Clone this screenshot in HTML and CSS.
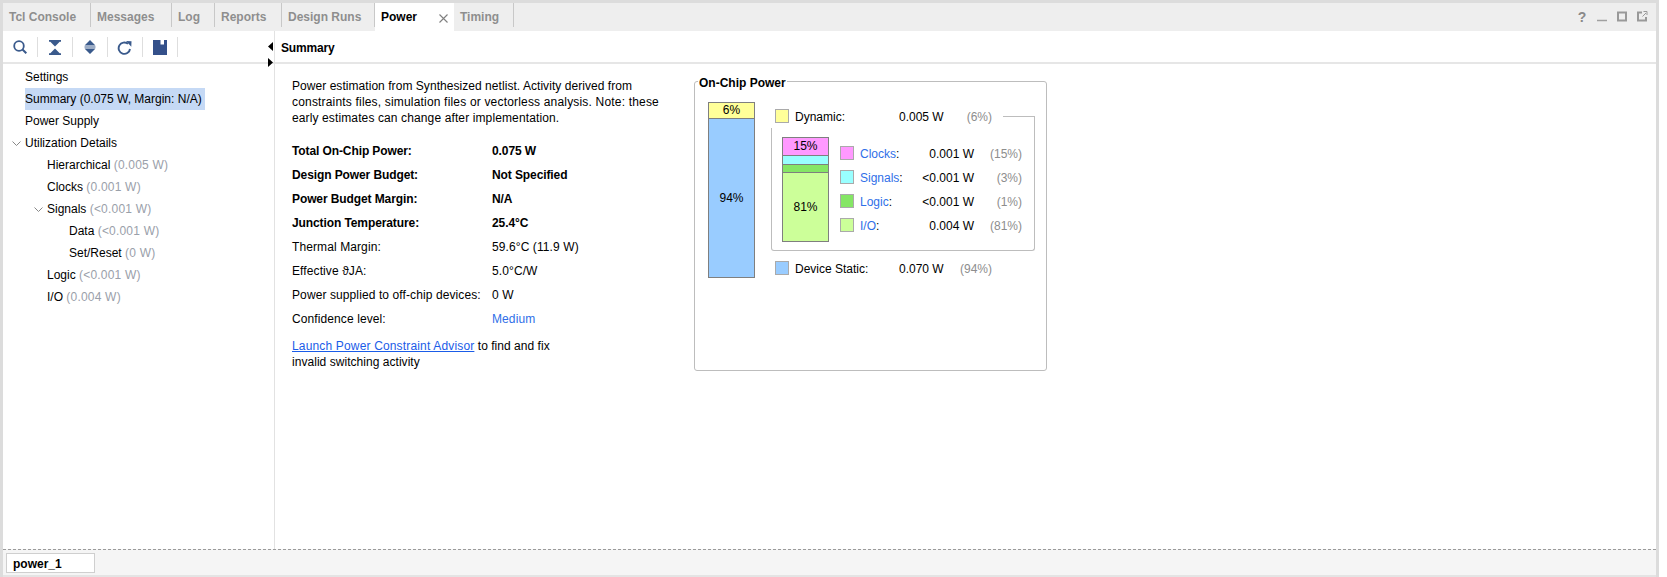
FILE: index.html
```html
<!DOCTYPE html>
<html lang="en">
<head>
<meta charset="utf-8">
<title>Power</title>
<link rel="stylesheet" href="styles.css">
</head>
<body>
<div class="window">
  <div class="tabbar">
    <div class="tab tab-tcl">Tcl Console</div>
    <div class="tab tab-msg">Messages</div>
    <div class="tab tab-log">Log</div>
    <div class="tab tab-rep">Reports</div>
    <div class="tab tab-run">Design Runs</div>
    <div class="tab tab-active">Power<svg class="close" width="9" height="9" viewBox="0 0 9 9"><path d="M.5.500l8 8M8.500.500l-8 8" stroke="#808080" stroke-width="1.1" fill="none"/></svg></div>
    <div class="tab tab-tim">Timing</div>
    <div class="win-icons">
      <span class="help">?</span>
      <svg width="12" height="12" viewBox="0 0 12 12"><path d="M1 9.500h10" stroke="#a0a0a0" stroke-width="1.500"/></svg>
      <svg width="12" height="12" viewBox="0 0 12 12"><rect x="2" y="1.500" width="8" height="8" fill="none" stroke="#999" stroke-width="2"/></svg>
      <svg width="12" height="12" viewBox="0 0 12 12"><path d="M6 1.500H2v8h8V6" fill="none" stroke="#999" stroke-width="2"/><path d="M6.500 5.500L10 2M7.500.500h3.500V4" fill="none" stroke="#999" stroke-width="1"/></svg>
    </div>
  </div>
  <div class="main">
    <aside class="side">
      <div class="toolbar">
        <button class="tool"><svg width="14" height="14" viewBox="0 0 14 14"><circle cx="6" cy="6" r="4.800" fill="none" stroke="#3a5a8c" stroke-width="1.800"/><path d="M9.500 9.500l3.800 3.800" stroke="#3a5a8c" stroke-width="2"/></svg></button>
        <button class="tool"><svg width="12" height="15" viewBox="0 0 12 15"><path d="M0 0h12v1.800h-1.300L6 6.400 1.300 1.800H0zM6 8.600l4.700 4.600H12V15H0v-1.800h1.300z" fill="#3a5a8c"/></svg></button>
        <button class="tool"><svg width="14" height="14" viewBox="0 0 14 14"><path d="M7 0l5.500 5.500h-11zM1.500 8.500h11L7 14z" fill="#3a5a8c"/><path d="M1.500 7h11" stroke="#3a5a8c" stroke-width="1"/></svg></button>
        <button class="tool"><svg width="15" height="15" viewBox="0 0 15 15"><path d="M13 9a5.700 5.700 0 1 1-2-5.200" fill="none" stroke="#3a5a8c" stroke-width="1.900"/><path d="M9 1.100l5.500.200-.2 5.500z" fill="#3a5a8c"/></svg></button>
        <button class="tool"><svg width="14" height="15" viewBox="0 0 14 15"><path d="M0 0h14v15H0zM7.500 0v4.500H11V0z" fill="#34508a" fill-rule="evenodd"/></svg></button>
      </div>
      <ul class="tree">
        <li class="row lvl1"><span>Settings</span></li>
        <li class="row lvl1"><span class="sel">Summary (0.075 W, Margin: N/A)</span></li>
        <li class="row lvl1"><span>Power Supply</span></li>
        <li class="row lvl1"><svg class="chev" width="9" height="6" viewBox="0 0 9 6"><path d="M.5.500l4 4 4-4" fill="none" stroke="#888"/></svg><span>Utilization Details</span></li>
        <li class="row lvl2"><span>Hierarchical <em>(0.005 W)</em></span></li>
        <li class="row lvl2"><span>Clocks <em>(0.001 W)</em></span></li>
        <li class="row lvl2"><svg class="chev" width="9" height="6" viewBox="0 0 9 6"><path d="M.5.500l4 4 4-4" fill="none" stroke="#888"/></svg><span>Signals <em>(&lt;0.001 W)</em></span></li>
        <li class="row lvl3"><span>Data <em>(&lt;0.001 W)</em></span></li>
        <li class="row lvl3"><span>Set/Reset <em>(0 W)</em></span></li>
        <li class="row lvl2"><span>Logic <em>(&lt;0.001 W)</em></span></li>
        <li class="row lvl2"><span>I/O <em>(0.004 W)</em></span></li>
      </ul>
    </aside>
    <section class="content">
      <div class="splitter">
        <svg class="arrow" width="5" height="9" viewBox="0 0 5 9"><path d="M5 0v9L0 4.500z" fill="#000"/></svg>
        <svg class="arrow" width="5" height="9" viewBox="0 0 5 9"><path d="M0 0v9l5-4.500z" fill="#000"/></svg>
      </div>
      <h2 class="heading">Summary</h2>
      <div class="body">
        <div class="info">
          <p class="intro"><span class="l1">Power estimation from Synthesized netlist. Activity derived from</span><br><span class="l2">constraints files, simulation files or vectorless analysis. Note: these</span><br><span class="l3">early estimates can change after implementation.</span></p>
          <dl class="facts">
            <div class="fact strong"><dt>Total On-Chip Power:</dt><dd>0.075 W</dd></div>
            <div class="fact strong"><dt>Design Power Budget:</dt><dd>Not Specified</dd></div>
            <div class="fact strong"><dt>Power Budget Margin:</dt><dd>N/A</dd></div>
            <div class="fact strong"><dt>Junction Temperature:</dt><dd>25.4°C</dd></div>
            <div class="fact"><dt>Thermal Margin:</dt><dd>59.6°C (11.9 W)</dd></div>
            <div class="fact"><dt>Effective ϑJA:</dt><dd>5.0°C/W</dd></div>
            <div class="fact"><dt>Power supplied to off-chip devices:</dt><dd>0 W</dd></div>
            <div class="fact"><dt>Confidence level:</dt><dd class="link">Medium</dd></div>
          </dl>
          <p class="advisor"><a href="#">Launch Power Constraint Advisor</a> to find and fix<br>invalid switching activity</p>
        </div>
        <fieldset class="chip">
          <legend>On-Chip Power</legend>
          <div class="chip-in">
            <div class="bar bar-main">
              <div class="seg c-dyn s16">6%</div>
              <div class="seg c-static grow">94%</div>
            </div>
            <div class="legend">
              <div class="lg-row lg-dyn">
                <i class="swatch c-dyn"></i><span class="lg-name">Dynamic:</span><span class="lg-val">0.005 W</span><span class="lg-pct">(6%)</span>
              </div>
              <div class="nested">
                <div class="bar bar-sub">
                  <div class="seg c-clk s18">15%</div>
                  <div class="seg c-sig s9"></div>
                  <div class="seg c-log s8"></div>
                  <div class="seg c-io grow">81%</div>
                </div>
                <div class="sub-rows">
                  <div class="sub-row"><i class="swatch c-clk"></i><span class="sub-name"><a>Clocks</a>:</span><span class="sub-val">0.001 W</span><span class="sub-pct">(15%)</span></div>
                  <div class="sub-row"><i class="swatch c-sig"></i><span class="sub-name"><a>Signals</a>:</span><span class="sub-val">&lt;0.001 W</span><span class="sub-pct">(3%)</span></div>
                  <div class="sub-row"><i class="swatch c-log"></i><span class="sub-name"><a>Logic</a>:</span><span class="sub-val">&lt;0.001 W</span><span class="sub-pct">(1%)</span></div>
                  <div class="sub-row"><i class="swatch c-io"></i><span class="sub-name"><a>I/O</a>:</span><span class="sub-val">0.004 W</span><span class="sub-pct">(81%)</span></div>
                </div>
              </div>
              <div class="lg-row lg-static">
                <i class="swatch c-static"></i><span class="lg-name">Device Static:</span><span class="lg-val">0.070 W</span><span class="lg-pct">(94%)</span>
              </div>
            </div>
          </div>
        </fieldset>
      </div>
    </section>
  </div>
  <div class="footer"><div class="footer-tab">power_1</div></div>
</div>
</body>
</html>
```
FILE: styles.css
```css
* { box-sizing: border-box; }
html, body { margin: 0; height: 100%; background: #fff; }
body { font: 12px/16px "Liberation Sans", Arial, sans-serif; color: #000; overflow: hidden; }
.window { width: 1659px; height: 577px; border-top: 3px solid #dcdcdc; border-left: 3px solid #dcdcdc; border-right: 3px solid #dcdcdc; display: flex; flex-direction: column; }
.tabbar { height: 28px; background: #eeeeee; display: flex; align-items: flex-start; flex: none; position: relative; }
.tab { font-weight: bold; color: #8e8e8e; padding: 6px 0 0 6px; height: 24px; line-height: 16px; border-right: 1px solid #c8c8c8; position: relative; flex: none; }
.tab-tcl { width: 88px; }
.tab-msg { width: 81px; }
.tab-log { width: 43px; }
.tab-rep { width: 67px; }
.tab-run { width: 93px; }
.tab-active { width: 79px; height: 28px; background: #fff; color: #000; border-right: 0; }
.tab-tim { width: 60px; }
.close { position: absolute; right: 6px; top: 11px; }
.win-icons { margin-left: auto; height: 28px; display: flex; align-items: center; gap: 8px; padding: 0 8px 0 0; }
.help { font-weight: bold; font-size: 14px; color: #8a8a8a; width: 12px; text-align: center; }
.main { flex: 1; display: flex; min-height: 0; }
.side { width: 272px; flex: none; border-right: 1px solid #e2e2e2; }
.toolbar { height: 33px; border-bottom: 2px solid #e6e6e6; display: flex; align-items: flex-start; padding: 6px 0 0 0; }
.tool { width: 35px; height: 20px; padding: 0 1px 0 0; border: 0; border-right: 1px solid #dedede; background: none; display: flex; align-items: center; justify-content: center; }
.tree { list-style: none; margin: 0; padding: 2px 0 0; }
.row { height: 22px; display: flex; align-items: center; position: relative; line-height: 22px; }
.row em { font-style: normal; color: #9aa0aa; letter-spacing: .2px; }
.lvl1 { padding-left: 22px; }
.lvl2 { padding-left: 44px; }
.lvl3 { padding-left: 66px; }
.sel { background: #c5d9f5; padding-right: 3px; }
.chev { position: absolute; margin-left: -13px; top: 9px; }
.content { flex: 1; display: flex; flex-direction: column; position: relative; min-width: 0; }
.splitter { position: absolute; left: -7px; top: 11px; display: flex; flex-direction: column; gap: 7px; }
.arrow { display: block; }
.heading { height: 33px; margin: 0; font-size: 12px; line-height: 16px; font-weight: bold; padding: 9px 0 0 6px; border-bottom: 2px solid #e6e6e6; letter-spacing: -.15px; }
.body { display: flex; padding: 14px 0 0 17px; flex: 1; }
.info { width: 402px; flex: none; }
.intro { margin: 0 0 13px; white-space: nowrap; }
.l1 { letter-spacing: .05px; }
.l2 { letter-spacing: .18px; }
.l3 { letter-spacing: .12px; }
.facts { margin: 0; }
.fact { display: flex; height: 24px; align-items: center; letter-spacing: .1px; }
.fact.strong { font-weight: bold; letter-spacing: -.1px; }
.fact dt { width: 200px; flex: none; }
.fact dd { margin: 0; }
.fact .link { color: #2f6fe8; }
.advisor { margin: 7px 0 0; letter-spacing: .04px; }
.advisor a { color: #1a5ce8; text-decoration: underline; letter-spacing: .16px; }
.chip { width: 353px; height: 299px; margin: -6px 0 0 0; padding: 0; border: 1px solid #bdbdbd; border-radius: 3px; flex: none; }
.chip legend { font-weight: bold; margin-left: 3px; padding: 4px 1px 0; line-height: 14px; }
.chip-in { display: flex; padding: 12px 0 0 13px; }
.bar { border: 1px solid #7f7f7f; display: flex; flex-direction: column; text-align: center; flex: none; }
.bar-main { width: 47px; height: 176px; }
.bar-sub { width: 47px; height: 105px; }
.seg { border-bottom: 1px solid #7f7f7f; }
.seg:last-child { border-bottom: 0; }
.seg.grow { flex: 1; display: flex; align-items: center; justify-content: center; }
.s16 { height: 16px; line-height: 15px; }
.s18 { height: 18px; line-height: 17px; }
.s9 { height: 9px; }
.s8 { height: 8px; }
.c-dyn { background: #ffff99; }
.c-static { background: #99ccff; }
.c-clk { background: #ff99ff; }
.c-sig { background: #99ffff; }
.c-log { background: #85e665; }
.c-io { background: #ccff99; }
.legend { margin-left: 16px; width: 264px; position: relative; }
.swatch { display: block; width: 14px; height: 14px; border: 1px solid #aaa; flex: none; }
.lg-row { display: flex; align-items: center; height: 14px; padding-left: 4px; }
.lg-dyn { margin-top: 7px; }
.lg-name { margin-left: 6px; width: 104px; flex: none; padding-top: 2px; }
.lg-val { width: 45px; flex: none; white-space: nowrap; padding-top: 2px; }
.lg-pct { width: 48px; text-align: right; color: #8d8d8d; flex: none; padding-top: 2px; }
.lg-dyn::after { content: ""; width: 32px; height: 1px; background: #bdbdbd; margin-left: 11px; flex: none; }
.nested { position: relative; display: flex; height: 123px; margin-top: 5px; padding: 9px 0 0 10px; border-left: 1px solid #bdbdbd; border-right: 1px solid #bdbdbd; border-bottom: 1px solid #bdbdbd; border-radius: 0 0 3px 3px; }
.nested::after { content: ""; position: absolute; right: -1px; top: -12px; height: 12px; width: 1px; background: #bdbdbd; }
.sub-rows { margin-left: 11px; padding-top: 9px; display: flex; flex-direction: column; gap: 10px; }
.sub-row { display: flex; align-items: center; height: 14px; }
.sub-name { margin-left: 6px; width: 50px; flex: none; padding-top: 2px; }
.sub-name a { color: #2f6fe8; }
.sub-val { width: 64px; text-align: right; flex: none; white-space: nowrap; padding-top: 2px; }
.sub-pct { width: 48px; text-align: right; color: #8d8d8d; flex: none; padding-top: 2px; }
.lg-static { margin-top: 10px; }
.footer { height: 28px; flex: none; background: #f5f5f5; border-top: 1px dashed #9a9a9a; padding: 3px 0 0 3px; border-bottom: 2px solid #e4e4e4; }
.footer-tab { width: 89px; height: 20px; background: #fff; border: 1px solid #cfcfcf; font-weight: bold; padding-left: 6px; line-height: 20px; }
```
